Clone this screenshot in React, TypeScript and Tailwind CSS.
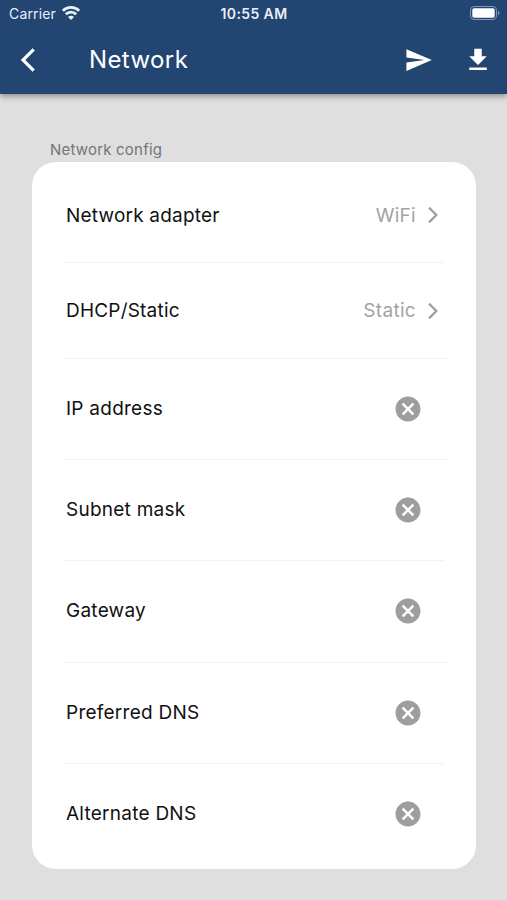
import type { ReactNode } from 'react';

type Row = { label: string; value?: string; className: string };

const rows: Row[] = [
  { label: 'Network adapter', value: 'WiFi', className: 'h-[101px] pt-[6px] w-[380px]' },
  { label: 'DHCP/Static', value: 'Static', className: 'h-[96px] w-[384px]' },
  { label: 'IP address', className: 'h-[101px] pb-px w-[384px]' },
  { label: 'Subnet mask', className: 'h-[101px] w-[380px]' },
  { label: 'Gateway', className: 'h-[102px] pb-px w-[384px]' },
  { label: 'Preferred DNS', className: 'h-[101px] w-[380px]' },
  { label: 'Alternate DNS', className: 'h-[100px] w-[384px]' },
];

type IconProps = { className: string; viewBox?: string; children: ReactNode };

function Icon({ className, viewBox = '0 0 24 24', children }: IconProps) {
  return (
    <svg viewBox={viewBox} fill="currentColor" className={`shrink-0 ${className}`}>
      {children}
    </svg>
  );
}

function StatusBar() {
  return (
    <div className="grid grid-cols-3 items-center h-[27px] pl-[9px] pr-[7px] text-[#e9eff7]">
      <div className="flex items-center gap-[6px]">
        <span className="text-[14px] leading-[27px] tracking-[0.15px]">Carrier</span>
        <svg viewBox="0 0 18 14" className="mb-px w-[18px] h-[14px]" fill="none" stroke="currentColor" strokeWidth="2.7">
          <path d="M0.9 4.8a11.5 11.5 0 0 1 16.2 0" />
          <path d="M3.8 8.2a7.4 7.4 0 0 1 10.4 0" />
          <path d="M9 13.9 6 10.9a4.2 4.2 0 0 1 6 0z" fill="currentColor" stroke="none" />
        </svg>
      </div>
      <div className="pr-px text-center text-[14px] font-semibold tracking-[0.4px]">10:55 AM</div>
      <svg viewBox="0 0 30 14" className="justify-self-end mb-px w-[30px] h-[14px]">
        <rect x="0.5" y="0.5" width="26" height="13" rx="3.5" fill="none" stroke="#7f96b4" />
        <rect x="2.3" y="2.3" width="22.4" height="9.4" rx="1.8" fill="#ffffff" />
        <path d="M28 4.7a2.5 2.5 0 0 1 0 4.6z" fill="#7f96b4" />
      </svg>
    </div>
  );
}

function Header() {
  return (
    <header className="relative h-[94px] bg-[#234572] text-white shadow-[0_2px_6px_rgba(0,0,0,0.4)]">
      <StatusBar />
      <div className="flex items-center h-[65px] pl-[21px] pr-[14px]">
        <Icon className="w-[28px] h-[28px]">
          <path d="M11.67 3.87 9.9 2.1 0 12l9.9 9.9 1.77-1.77L3.54 12z" stroke="currentColor" strokeWidth="0.4" />
        </Icon>
        <h1 className="ml-[40px] pt-px text-[24px] leading-[30px] tracking-[0.4px]">Network</h1>
        <Icon className="ml-auto w-[29px] h-[30px]">
          <path d="M2.01 21 23 12 2.01 3 2 10l15 2-15 2z" />
        </Icon>
        <Icon className="ml-[30px] w-[30px] h-[30px]">
          <path d="M19 9h-4V3H9v6H5l7 7 7-7zM5 18v2h14v-2H5z" />
        </Icon>
      </div>
    </header>
  );
}

function ConfigRow({ row, last }: { row: Row; last: boolean }) {
  return (
    <div className={`flex items-center ml-[32px] pl-[2px] ${last ? '' : 'border-b border-[#f3f3f3]'} ${row.className}`}>
      {row.value ? (
        <>
          <span className="pt-px w-[200px] text-[19px] leading-6 tracking-[0.2px] text-[#111111]">{row.label}</span>
          <div className="flex items-center justify-end w-[172px] text-[#9e9e9e]">
            <span className="pt-px text-[19px] leading-6 tracking-[0.3px] text-[#a3a3a3]">{row.value}</span>
            <Icon viewBox="6 2 12 20" className="ml-[12px] w-[10px] h-[16px]">
              <path d="M6.23 20.23 8 22l10-10L8 2 6.23 3.77 14.46 12z" stroke="currentColor" strokeWidth="0.4" />
            </Icon>
          </div>
        </>
      ) : (
        <>
          <span className="w-[200px] text-[19px] leading-6 tracking-[0.25px] text-[#111111]">{row.label}</span>
          <Icon className="ml-[127px] w-[30px] h-[30px] text-[#9e9e9e]">
            <path d="M12 2C6.47 2 2 6.47 2 12s4.47 10 10 10 10-4.47 10-10S17.53 2 12 2zm5 13.59L15.59 17 12 13.41 8.41 17 7 15.59 10.59 12 7 8.41 8.41 7 12 10.59 15.59 7 17 8.41 13.41 12 17 15.59z" />
          </Icon>
        </>
      )}
    </div>
  );
}

export default function App() {
  return (
    <div className="h-[900px] w-[507px] overflow-hidden bg-[#dfdfdf] font-['Inter',sans-serif]">
      <Header />
      <main className="pt-[45px] px-[32px]">
        <h2 className="pl-[18px] text-[15px] leading-[22px] tracking-[0.2px] text-[#757575]">Network config</h2>
        <section className="mt-px h-[707px] w-[444px] rounded-[24px] bg-white">
          {rows.map((row, i) => (
            <ConfigRow key={row.label} row={row} last={i === rows.length - 1} />
          ))}
        </section>
      </main>
    </div>
  );
}
